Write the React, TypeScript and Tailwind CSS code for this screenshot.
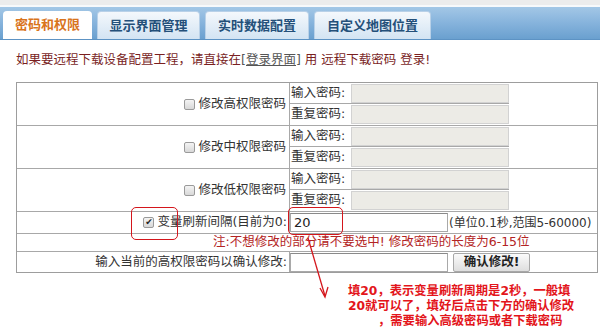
const FONT = 'font-["DejaVu_Sans","Noto_Sans_CJK_SC",sans-serif]';

const TABS = ['密码和权限', '显示界面管理', '实时数据配置', '自定义地图位置'];
const TAB_W = ['w-[89px]', 'w-[103px]', 'w-[104px]', 'w-[117px]'];

function PwdRows() {
  return (
    <div className="flex flex-col">
      {['输入密码:', '重复密码:'].map((label, i) => (
        <div
          key={label}
          className={`flex items-center h-[21px] ${i === 0 ? 'border-b border-[#a8a8a8]' : ''}`}
        >
          <span className="w-[61px] pl-[1px] text-[12.5px] text-[#333] leading-none">{label}</span>
          <div className="w-[158px] h-[19px] bg-[#ecebe6] border border-[#d2d2d2]" />
        </div>
      ))}
    </div>
  );
}

export default function App() {
  return (
    <div className={`relative w-[600px] h-[332px] bg-white overflow-hidden ${FONT}`}>
      <div className="h-[5px] bg-[#ececec]" />
      <div className="h-[2px] bg-[#f7f9fb]" />
      {/* tab bar */}
      <div className="h-[33px] pt-[5px] pl-[3px] flex items-end gap-[5px] bg-gradient-to-b from-[#a3c7e6] via-[#86b3dc] to-[#6aa0cf] border-b border-[#5d93c4]">
        {TABS.map((t, i) => (
          <div
            key={t}
            className={`${TAB_W[i]} h-[28px] rounded-t-[4px] flex items-center justify-center text-[13px] font-bold ${
              i === 0
                ? 'bg-white text-[#d9741c]'
                : 'bg-gradient-to-b from-[#f4f8fc] to-[#d3e4f3] text-[#24507a] border border-b-0 border-[#b9d1e8]'
            }`}
          >
            {t}
          </div>
        ))}
      </div>

      {/* instruction */}
      <p className="mt-[11px] pl-[16px] text-[12.5px] leading-[17px] text-[#7a1f1f] whitespace-nowrap">
        如果要远程下载设备配置工程，请直接在
        <span className="underline text-[#555]">[登录界面]</span> 用 远程下载密码 登录!
      </p>

      {/* form table */}
      <div className="mt-[14px] ml-[16px] w-[582px] border border-[#9d9d9d] text-[12.5px] text-[#333]">
        {['修改高权限密码', '修改中权限密码', '修改低权限密码'].map((label) => (
          <div key={label} className="flex h-[43px] border-b border-[#a8a8a8]">
            <div className="w-[273px] flex items-center justify-end pr-[3px] gap-[3px] border-r border-[#a8a8a8]">
              <span className="w-[11px] h-[11px] border border-[#9a9a9a] rounded-[2px] bg-gradient-to-b from-[#f4f4f4] to-[#d8d8d8]" />
              <span className="leading-none">{label}</span>
            </div>
            <PwdRows />
          </div>
        ))}
        <div className="flex h-[22px] border-b border-[#a8a8a8]">
          <div className="w-[273px] flex items-center justify-end pr-[2px] gap-[3px] border-r border-[#a8a8a8] whitespace-nowrap">
            <span className="shrink-0 w-[11px] h-[11px] border border-[#9a9a9a] rounded-[2px] bg-gradient-to-b from-[#f4f4f4] to-[#d8d8d8] flex items-center justify-center text-[9px] leading-none text-[#222]">
              ✔
            </span>
            <span className="leading-none">变量刷新间隔(目前为0:</span>
          </div>
          <div className="flex items-center whitespace-nowrap">
            <div className="w-[158px] h-[19px] border border-[#a9a9a9] border-t-[#8a8a8a] bg-white flex items-center pl-[3px] text-[13px] text-[#222]">
              20
            </div>
            <span className="pl-[1px] text-[12px] leading-none">(单位0.1秒,范围5-60000)</span>
          </div>
        </div>
        <div className="h-[18px] border-b border-[#a8a8a8] pl-[196px] flex items-center text-[#b32424] whitespace-nowrap">
          注:不想修改的部分请不要选中! 修改密码的长度为6-15位
        </div>
        <div className="flex h-[20px]">
          <div className="w-[273px] flex items-center justify-end pr-[2px] border-r border-[#a8a8a8] leading-none">
            输入当前的高权限密码以确认修改:
          </div>
          <div className="flex items-center gap-[5px]">
            <div className="w-[158px] h-[19px] border border-[#a9a9a9] border-t-[#8a8a8a] bg-white" />
            <button className="w-[77px] h-[19px] border border-[#a8a8a8] rounded-[2px] bg-gradient-to-b from-[#fbfbfb] to-[#dedede] text-[12.5px] font-bold text-[#222] leading-none">
              确认修改!
            </button>
          </div>
        </div>
      </div>

      {/* annotation overlays */}
      <div className="absolute left-[131px] top-[207px] w-[47px] h-[33px] border-[1.5px] border-[#d4161c] rounded-[5px]" />
      <div className="absolute left-[288px] top-[207px] w-[55px] h-[28px] border-[1.5px] border-[#d4161c] rounded-[5px]" />
      <svg className="absolute left-[300px] top-[236px]" width="32" height="64" viewBox="0 0 32 64">
        <line x1="8" y1="2" x2="25" y2="60" stroke="#d4161c" strokeWidth="1.3" />
        <path d="M20 52 L25 61 L28 51" fill="none" stroke="#d4161c" strokeWidth="1.3" />
      </svg>
      <div className="absolute left-[348px] top-[284px] text-[12.3px] leading-[15px] font-bold text-[#e3151b] whitespace-nowrap">
        <div>填20，表示变量刷新周期是2秒，一般填</div>
        <div>20就可以了，填好后点击下方的确认修改</div>
        <div className="pl-[30px]">，需要输入高级密码或者下载密码</div>
      </div>
    </div>
  );
}
